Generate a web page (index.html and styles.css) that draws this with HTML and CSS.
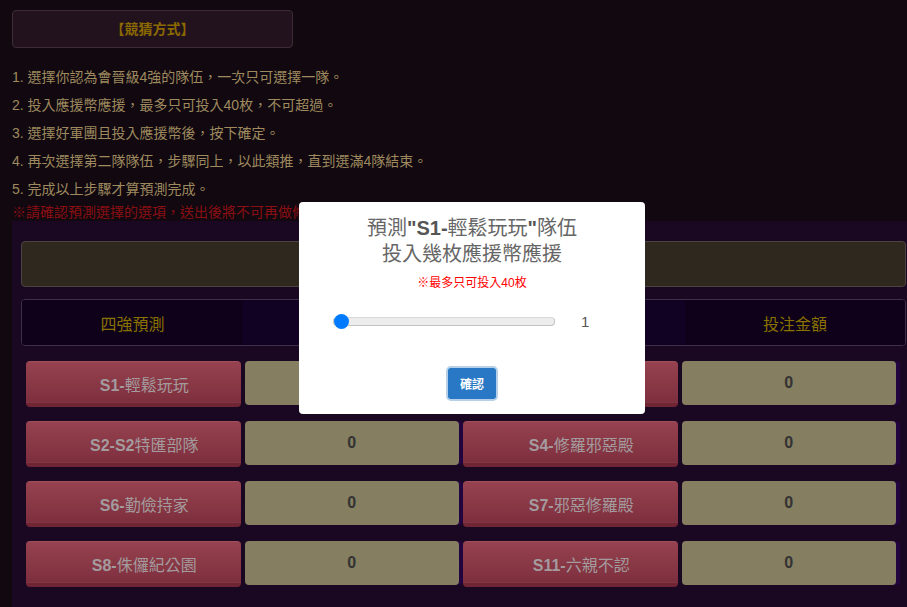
FILE: index.html
```html
<!DOCTYPE html>
<html lang="zh-Hant">
<head>
  <meta charset="UTF-8" />
  <meta name="viewport" content="width=device-width, initial-scale=1.0" />
  <title>四強預測</title>
  <link rel="stylesheet" href="styles.css">
</head>
<body>
  <div class="page">
    <div class="rule-title">【競猜方式】</div>

    <ul class="rules">
      <li>1. 選擇你認為會晉級4強的隊伍，一次只可選擇一隊。</li>
      <li>2. 投入應援幣應援，最多只可投入40枚，不可超過。</li>
      <li>3. 選擇好軍團且投入應援幣後，按下確定。</li>
      <li>4. 再次選擇第二隊隊伍，步驟同上，以此類推，直到選滿4隊結束。</li>
      <li>5. 完成以上步驟才算預測完成。</li>
    </ul>
    <p class="warn">※請確認預測選擇的選項，送出後將不可再做修改。</p>

    <section class="panel">
      <div class="info-box"></div>

      <div class="head-row">
        <div class="head-cell dark">四強預測</div>
        <div class="head-cell">投注金額</div>
        <div class="head-cell">四強預測</div>
        <div class="head-cell dark">投注金額</div>
      </div>

      <div class="team-grid">
        <button class="team"><b>S1-</b>輕鬆玩玩</button>
        <div class="bet">0</div>
        <button class="team"><b>S3-</b>戰神殿</button>
        <div class="bet">0</div>

        <button class="team"><b>S2-S2</b>特匯部隊</button>
        <div class="bet">0</div>
        <button class="team"><b>S4-</b>修羅邪惡殿</button>
        <div class="bet">0</div>

        <button class="team"><b>S6-</b>勤儉持家</button>
        <div class="bet">0</div>
        <button class="team"><b>S7-</b>邪惡修羅殿</button>
        <div class="bet">0</div>

        <button class="team"><b>S8-</b>侏儸紀公園</button>
        <div class="bet">0</div>
        <button class="team"><b>S11-</b>六親不認</button>
        <div class="bet">0</div>
      </div>
    </section>
  </div>

  <div class="modal">
    <h2 class="modal-title">預測<b>"S1-</b>輕鬆玩玩<b>"</b>隊伍<br>投入幾枚應援幣應援</h2>
    <p class="modal-note">※最多只可投入40枚</p>
    <div class="slider-row">
      <input type="range" id="coins" min="1" max="40" value="1" />
      <span class="coin-value" id="coinValue">1</span>
    </div>
    <button class="confirm-btn">確認</button>
  </div>

  <script>
    var range = document.getElementById('coins');
    range.addEventListener('input', function () {
      document.getElementById('coinValue').textContent = this.value;
    });
  </script>
</body>
</html>
```

FILE: styles.css
```css
body {
  margin: 0;
  background-color: #110810;
  font-family: "Liberation Sans", "Noto Sans CJK TC", sans-serif;
  overflow: hidden;
}

.page {
  padding-top: 10px;
}

.rule-title {
  margin-left: 12px;
  width: 279px;
  height: 36px;
  line-height: 36px;
  text-align: center;
  font-size: 14px;
  font-weight: bold;
  color: #8a6900;
  background-color: #22121e;
  border: 1px solid #3d2c38;
  border-radius: 4px;
}

.rules {
  list-style: none;
  margin: 15px 0 0 12px;
  padding: 0;
}

.rules li {
  font-size: 14px;
  line-height: 28px;
  color: #9e8a5e;
}

.warn {
  margin: 0 0 0 12px;
  font-size: 14px;
  line-height: 18px;
  color: #8a0f12;
}

.panel {
  margin-left: 12px;
  width: 900px;
  height: 400px;
  padding: 20px 0 0 9px;
  background-color: #1a0722;
}

.info-box {
  width: 883px;
  height: 44px;
  background-color: #2e281e;
  border: 1px solid #4a4440;
  border-radius: 4px;
}

.head-row {
  display: grid;
  grid-template-columns: 221px 220px 222px 220px;
  width: 883px;
  height: 45px;
  margin-top: 12px;
  border: 1px solid #3e3048;
  border-radius: 4px;
  overflow: hidden;
}

.head-cell {
  display: flex;
  align-items: center;
  justify-content: center;
  font-size: 16px;
  color: #8a7200;
  background-color: #110223;
}

.head-cell.dark {
  background-color: #0e0119;
}

.team-grid {
  display: grid;
  grid-template-columns: repeat(4, 1fr);
  column-gap: 4px;
  row-gap: 14px;
  width: 870px;
  margin: 15px 0 0 5px;
}

.team {
  height: 46px;
  padding: 0 0 2px 22px;
  font-family: "Liberation Sans", "Noto Sans CJK TC", sans-serif;
  font-size: 16px;
  color: #a39b9d;
  border: none;
  border-top: 1px solid #a04e5a;
  border-radius: 4px;
  background: linear-gradient(#964250, #7e2f3d 88%, #8a3e4e 89%, #6f2534 92%);
  cursor: pointer;
}

.team b {
  font-weight: bold;
}

.bet {
  height: 44px;
  display: flex;
  align-items: center;
  justify-content: center;
  font-size: 16px;
  font-weight: bold;
  color: #333;
  background-color: #857e60;
  border-radius: 4px;
  box-shadow: 4px 0 0 #22043e;
}

.modal {
  position: fixed;
  left: 299px;
  top: 202px;
  width: 346px;
  height: 212px;
  box-sizing: border-box;
  padding-top: 13px;
  background-color: #fff;
  border-radius: 4px;
  text-align: center;
}

.modal-title {
  margin: 0;
  font-size: 20px;
  line-height: 26px;
  font-weight: normal;
  color: #666;
}

.modal-title b {
  color: #555;
}

.modal-note {
  margin: 7px 0 0;
  font-size: 12px;
  line-height: 18px;
  color: #f00;
}

.slider-row {
  display: flex;
  align-items: center;
  gap: 26px;
  margin: 21px 0 0 34px;
  height: 16px;
}

.slider-row input[type=range] {
  -webkit-appearance: none;
  appearance: none;
  width: 220px;
  height: 7px;
  margin: 0;
  background-color: #ececec;
  border: 1px solid #c4c4c4;
  border-top-color: #d8d8d8;
  border-radius: 4px;
}

.slider-row input[type=range]::-webkit-slider-thumb {
  -webkit-appearance: none;
  width: 15px;
  height: 15px;
  border-radius: 50%;
  background-color: #007bff;
  border: none;
}

.coin-value {
  font-size: 15px;
  color: #555;
}

.confirm-btn {
  margin-top: 39px;
  width: 48px;
  height: 31px;
  font-family: "Liberation Sans", "Noto Sans CJK TC", sans-serif;
  font-size: 12px;
  font-weight: bold;
  color: #fff;
  background-color: #2878c6;
  border: none;
  border-radius: 3px;
  box-shadow: 0 0 0 2px #b6d0ea;
  cursor: pointer;
}
```
